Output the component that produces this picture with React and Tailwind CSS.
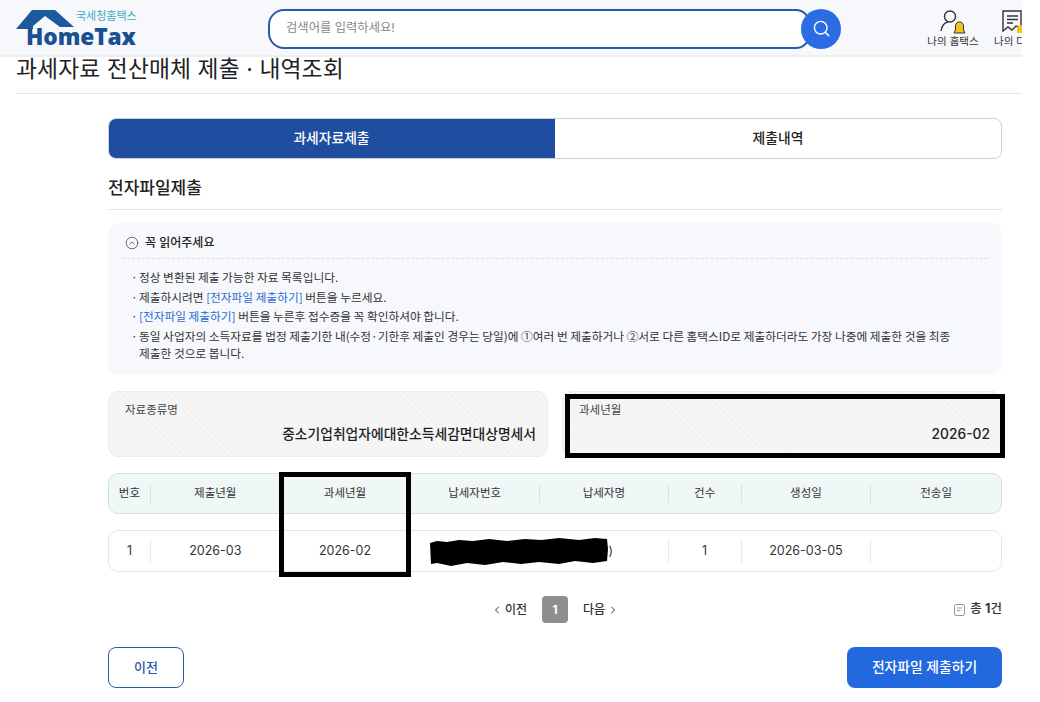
import { Search, CircleChevronUp, ChevronLeft, ChevronRight } from "lucide-react";

const font = "font-['Inter','Noto_Sans_CJK_KR',sans-serif]";
const cjk = "font-['Noto_Sans_CJK_KR',sans-serif]";
const hatch =
  "bg-[repeating-linear-gradient(45deg,#f3f3f3_0px,#f3f3f3_2px,#f7f7f7_2px,#f7f7f7_4px)]";

const columns = [
  { label: "번호", width: "w-[42px]", value: "1" },
  { label: "제출년월", width: "w-[130px]", value: "2026-03" },
  { label: "과세년월", width: "w-[130px]", value: "2026-02" },
  { label: "납세자번호", width: "w-[130px]", value: "" },
  { label: "납세자명", width: "w-[129px]", value: ")", valueClass: "pl-[14px]" },
  { label: "건수", width: "w-[73px]", value: "1" },
  { label: "생성일", width: "w-[130px]", value: "2026-03-05" },
  { label: "전송일", width: "w-[130px]", value: "" },
];

const notes = [
  <>정상 변환된 제출 가능한 자료 목록입니다.</>,
  <>
    제출하시려면 <span className="text-[#2a6bd0]">[전자파일 제출하기]</span> 버튼을 누르세요.
  </>,
  <>
    <span className="text-[#2a6bd0]">[전자파일 제출하기]</span> 버튼을 누른후 접수증을 꼭 확인하셔야 합니다.
  </>,
  <>
    동일 사업자의 소득자료를 법정 제출기한 내(수정·기한후 제출인 경우는 당일)에 ①여러 번 제출하거나 ②서로 다른 홈택스ID로 제출하더라도 가장 나중에 제출한 것을 최종 제출한 것으로 봅니다.
  </>,
];

const Logo = () => (
  <div className="relative h-[48px] w-[125px] shrink-0">
    <svg className="absolute left-0 top-[4px]" width="60" height="26" viewBox="0 0 60 26">
      <path d="M0 20 L16 1 H39 L58 18 H44 L29 7 L17 17 L17 20 Z" fill="#1d5a9c" />
    </svg>
    <span className={`absolute left-[60px] top-[3px] ${cjk} text-[11px] leading-[15px] text-[#3fa9c4]`}>
      국세청홈택스
    </span>
    <span className="absolute left-[10px] top-[20px] font-['Open_Sans',sans-serif] text-[22.7px] font-extrabold leading-[24px] tracking-[-0.1px] text-[#1b4f91]">
      HomeTax
    </span>
  </div>
);

const PersonBell = () => (
  <svg width="28" height="26" viewBox="0 0 28 26" fill="none">
    <circle cx="11" cy="7.5" r="5.5" stroke="#333" strokeWidth="1.4" />
    <path d="M2 22 C3 16 6 13.5 9 13" stroke="#333" strokeWidth="1.4" />
    <path d="M15 24 H26 L24.5 21 V17 C24.5 11.5 16.5 11.5 16.5 17 V21 Z" fill="#f5c518" stroke="#333" strokeWidth="1" />
  </svg>
);

const DocBell = () => (
  <svg width="24" height="26" viewBox="0 0 24 26" fill="none">
    <path d="M2 2 H20 V19 L15 17 L11 21 L7 18 L2 22 Z" stroke="#333" strokeWidth="1.4" />
    <path d="M6 7 H17 M6 10.5 H17 M6 14 H12" stroke="#333" strokeWidth="1.4" />
    <path d="M16 24 V19 C16 15 24 15 24 19 V24 Z" fill="#f5c518" />
  </svg>
);

const InfoBox = ({ label, value }) => (
  <div className={`h-[66px] w-[440px] rounded-[10px] border border-[#ececec] pl-4 pr-[11px] pt-[9px] ${hatch}`}>
    <div className="text-[11.5px] leading-[18px] text-[#444]">{label}</div>
    <div className="mt-[4px] text-right text-[13.8px] font-medium leading-[22px] text-[#222]">{value}</div>
  </div>
);

export default function App() {
  return (
    <div className={`relative h-[702px] w-[1040px] overflow-hidden bg-white ${font}`}>
      <div className="w-[1022px]">
        <header className="flex h-[57px] items-center border-b-2 border-[#eceef2] bg-[#f6f8fc] pl-4 pt-[2px]">
          <Logo />
          <div className="ml-[127px] flex items-center">
            <div className="flex h-[40px] w-[542px] items-center rounded-l-[16px] rounded-r-[14px] border-2 border-[#2a5aa8] bg-white pl-4 text-[12.3px] text-[#888]">
              검색어를 입력하세요!
            </div>
            <div className="-ml-[9px] flex h-[40px] w-[40px] items-center justify-center rounded-full bg-[#2b6be4]">
              <Search size={19} strokeWidth={1.8} className="text-white" />
            </div>
          </div>
          <div className="ml-[85px] flex w-[54px] flex-col items-center text-[10.5px] text-[#333]">
            <PersonBell />
            <span className="whitespace-nowrap leading-[14px]">나의 홈택스</span>
          </div>
          <div className="ml-[14px] flex min-w-0 flex-1 flex-col items-start overflow-hidden text-[10.5px] text-[#333]">
            <span className="ml-[7px]"><DocBell /></span>
            <span className="whitespace-nowrap leading-[14px]">나의 다이렉트</span>
          </div>
        </header>

        <div className="ml-4 h-[37px] border-b border-[#e6e6e6]">
          <h1 className="text-[22.8px] font-normal leading-[24px] tracking-[0.1px] text-[#222]">
            과세자료 전산매체 제출 · 내역조회
          </h1>
        </div>

        <main className="pl-[108px] pr-[20px] pt-[24px]">
          <div className="flex h-[41px] overflow-hidden rounded-[8px] border border-[#cfcfcf] text-[13.8px] font-medium">
            <div className="-my-px -ml-px flex w-[447px] items-center justify-center bg-[#1f4ea1] text-white">
              과세자료제출
            </div>
            <div className="flex flex-1 items-center justify-center text-[#222]">제출내역</div>
          </div>

          <h2 className="mt-[16px] border-b border-[#e3e3e3] pb-[8px] text-[17px] font-medium leading-[26px] text-[#222]">
            전자파일제출
          </h2>

          <section className="mt-[13px] h-[152px] rounded-[10px] bg-[#f6f8fc] px-[14px] pt-[11px]">
            <div className="flex items-center gap-[6px] border-b border-dashed border-[#dcdcdc] pb-[6px] pl-[3px] text-[12px] font-medium leading-[18px] text-[#222]">
              <CircleChevronUp size={14} strokeWidth={1.2} className="text-[#333]" />
              꼭 읽어주세요
            </div>
            <ul className={`mt-[8px] pl-[9px] pr-[30px] text-[11.7px] leading-[19.5px] text-[#333] ${cjk}`}>
              {notes.map((note, i) => (
                <li key={i} className={`flex ${i === 3 ? "mt-[1px] leading-[17px]" : ""}`}>
                  <span className="w-[8px] shrink-0">·</span>
                  <span className="break-keep">{note}</span>
                </li>
              ))}
            </ul>
          </section>

          <div className="mt-[16px] flex justify-between gap-[14px]">
            <InfoBox label="자료종류명" value="중소기업취업자에대한소득세감면대상명세서" />
            <InfoBox label="과세년월" value="2026-02" />
          </div>

          <div className="mt-[16px] flex h-[41px] items-center rounded-[10px] border border-[#cfe2e2] bg-[#eff7f7] text-[11.5px] text-[#333]">
            {columns.map((col, i) => (
              <div
                key={col.label}
                className={`flex h-[18px] items-center justify-center ${col.width} ${i < 7 ? "border-r border-[#d5e2e2]" : ""}`}
              >
                {col.label}
              </div>
            ))}
          </div>

          <div className="mt-[16px] flex h-[42px] items-center rounded-[10px] border border-[#dfe7e7] bg-white text-[12.5px] text-[#333]">
            {columns.map((col, i) => (
              <div
                key={col.label}
                className={`flex h-[24px] items-center justify-center ${col.width} ${col.valueClass || ""} ${i < 7 ? "border-r border-[#e6eaea]" : ""}`}
              >
                {col.value}
              </div>
            ))}
          </div>

          <div className="relative mt-[24px] flex h-[27px] items-center justify-center text-[12px] font-medium text-[#333]">
            <span className="flex items-center gap-[2px]">
              <ChevronLeft size={12} strokeWidth={2} />
              이전
            </span>
            <span className="ml-[15px] flex h-[27px] w-[26px] items-center justify-center rounded-[4px] bg-[#8e8e8e] text-[12px] font-bold text-white">
              1
            </span>
            <span className="ml-[15px] flex items-center gap-[2px]">
              다음
              <ChevronRight size={12} strokeWidth={2} />
            </span>
            <span className="absolute right-0 flex items-center gap-[5px] text-[12.5px] text-[#333]">
              <svg width="11" height="12" viewBox="0 0 11 12" fill="none">
                <rect x="0.5" y="0.5" width="10" height="11" rx="1.5" stroke="#999" />
                <path d="M3 4 H8 M3 6.5 H6.5" stroke="#999" />
              </svg>
              <span>총 <b className="font-bold">1</b>건</span>
            </span>
          </div>

          <div className="mt-[24px] flex items-center justify-between">
            <button className="h-[41px] w-[76px] rounded-[8px] border border-[#2a5aa8] bg-white text-[13px] font-medium text-[#2a5aa8]">
              이전
            </button>
            <button className="h-[41px] w-[155px] rounded-[8px] bg-[#2269e0] text-[13.8px] font-medium text-white">
              전자파일 제출하기
            </button>
          </div>
        </main>
      </div>

      {/* annotation boxes drawn over the screenshot */}
      <div className="absolute left-[565px] top-[394px] h-[64px] w-[440px] border-[5px] border-black" />
      <div className="absolute left-[279px] top-[472px] h-[105px] w-[132px] border-[5px] border-black" />
      <svg className="absolute left-[429px] top-[537px] blur-[0.6px]" width="181" height="31" viewBox="0 0 181 31">
        <path d="M1 6 L8 4 L18 5 L30 3 L44 4 L60 2 L78 4 L96 2 L112 3 L130 1 L150 3 L166 1 L178 2 L179 12 L178 24 L164 26 L146 24 L130 27 L110 25 L92 27 L74 25 L56 28 L38 26 L22 29 L8 26 L2 27 Z" fill="#000" />
      </svg>
    </div>
  );
}
